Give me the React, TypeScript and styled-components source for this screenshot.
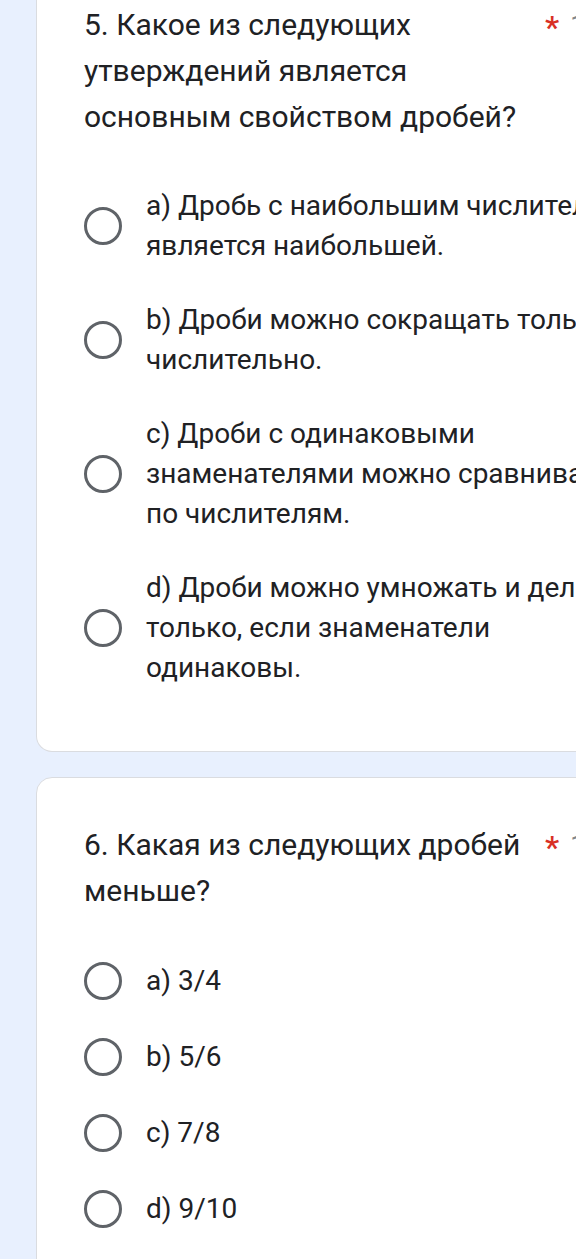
import React from "react";
import styled, { createGlobalStyle } from "styled-components";

const GlobalStyle = createGlobalStyle`
  html, body {
    margin: 0;
    padding: 0;
    background: #e8f0fe;
    overflow: hidden;
  }
  body {
    font-family: Roboto, "Noto Sans", "Liberation Sans", sans-serif;
    color: #202124;
  }
`;

const Page = styled.div`
  display: flex;
  flex-direction: column;
  gap: 25px;
  padding-left: 36px;
  width: 720px;
`;

const Card = styled.section<{ $cut?: boolean }>`
  background: #ffffff;
  border: 1px solid #dadce0;
  border-top: ${(p) => (p.$cut ? "none" : "1px solid #dadce0")};
  border-radius: ${(p) => (p.$cut ? "0 0 16px 16px" : "16px")};
  padding: ${(p) => (p.$cut ? "2px" : "44px")} 0 46px 47px;
  width: 680px;
  box-sizing: border-box;
`;

const TitleRow = styled.div`
  display: flex;
  align-items: flex-start;
`;

const Title = styled.div`
  width: 456px;
  font-size: 30px;
  line-height: 46px;
  color: #202124;
  flex: none;
`;

const Required = styled.span`
  color: #d93025;
  font-size: 32px;
  line-height: 46px;
  font-weight: 500;
  margin-left: 5px;
  margin-top: 2px;
`;

const Points = styled.span`
  color: #80868b;
  font-size: 26px;
  line-height: 46px;
  margin-left: 11px;
  white-space: nowrap;
`;

const Options = styled.div`
  display: flex;
  flex-direction: column;
  margin-top: 29px;
`;

const Option = styled.label`
  display: flex;
  align-items: center;
  padding: 17px 0;
`;

const RadioWrap = styled.span`
  display: flex;
  align-items: center;
  height: 42px;
  flex: none;
  margin-right: 24px;
`;

const Radio = styled.span`
  width: 38px;
  height: 38px;
  box-sizing: border-box;
  border: 3px solid #5f6368;
  border-radius: 50%;
`;

const OptionText = styled.span`
  width: 490px;
  font-size: 28px;
  line-height: 40px;
  color: #202124;
`;

type Q = { title: string; options: string[]; cut?: boolean };

const questions: Q[] = [
  {
    title: "5. Какое из следующих утверждений является основным свойством дробей?",
    cut: true,
    options: [
      "a) Дробь с наибольшим числителем является наибольшей.",
      "b) Дроби можно сокращать только числительно.",
      "c) Дроби с одинаковыми знаменателями можно сравнивать по числителям.",
      "d) Дроби можно умножать и делить только, если знаменатели одинаковы.",
    ],
  },
  {
    title: "6. Какая из следующих дробей меньше?",
    options: ["a) 3/4", "b) 5/6", "c) 7/8", "d) 9/10"],
  },
];

export default function App() {
  return (
    <>
      <GlobalStyle />
      <Page>
        {questions.map((q) => (
          <Card key={q.title} $cut={q.cut}>
            <TitleRow>
              <Title>{q.title}</Title>
              <Required>*</Required>
              <Points>1 балл</Points>
            </TitleRow>
            <Options>
              {q.options.map((o) => (
                <Option key={o}>
                  <RadioWrap>
                    <Radio />
                  </RadioWrap>
                  <OptionText>{o}</OptionText>
                </Option>
              ))}
            </Options>
          </Card>
        ))}
      </Page>
    </>
  );
}
